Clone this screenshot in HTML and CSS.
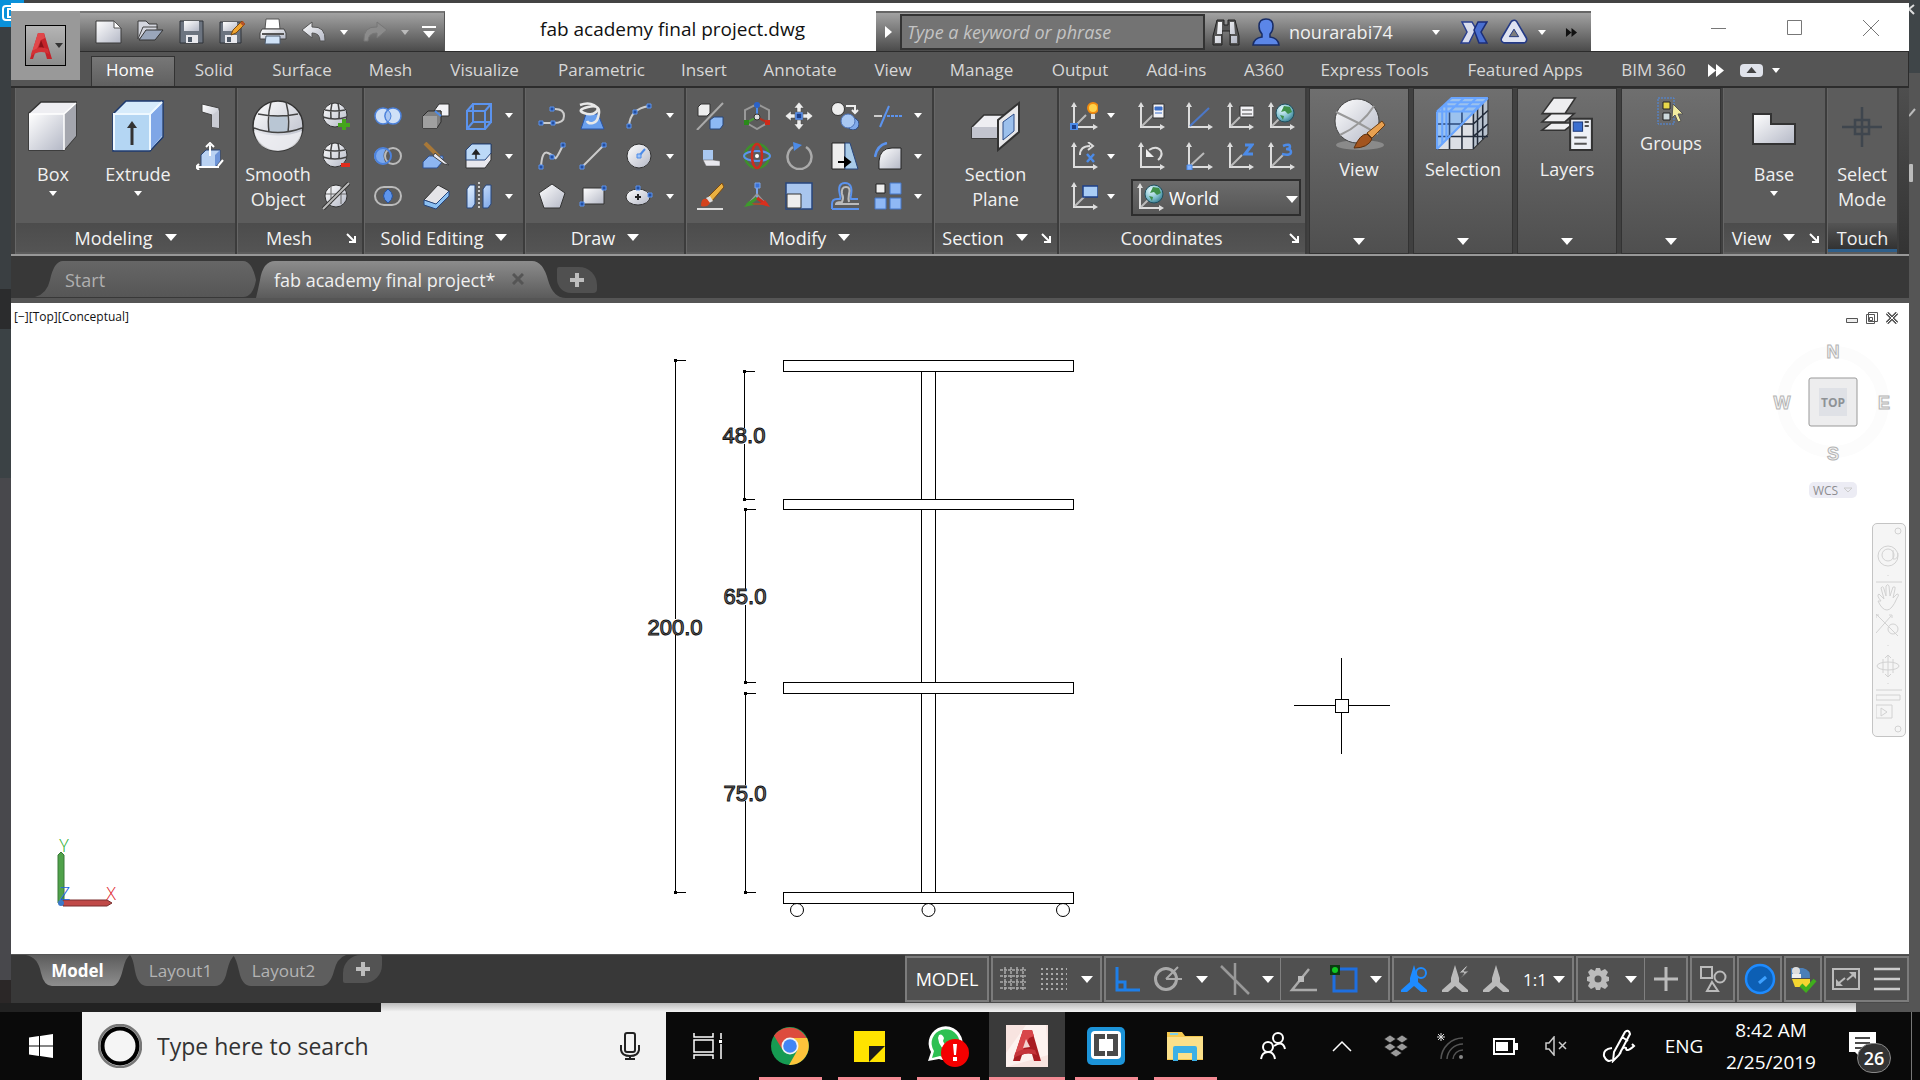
FILE: index.html
```html
<!DOCTYPE html>
<html lang="en">
<head>
<meta charset="utf-8">
<title>fab academy final project.dwg</title>
<link rel="stylesheet" href="styles.css">
</head>
<body>
<svg class="sprite" aria-hidden="true">
  <defs>
    <linearGradient id="gw" x1="0" y1="0" x2="1" y2="1"><stop offset="0" stop-color="#fff"/><stop offset="1" stop-color="#b4b8c6"/></linearGradient>
    <linearGradient id="gb" x1="0" y1="0" x2="1" y2="1"><stop offset="0" stop-color="#e4f2ff"/><stop offset="1" stop-color="#7fa9ea"/></linearGradient>
    <linearGradient id="tabOn" x1="0" y1="0" x2="0" y2="1"><stop offset="0" stop-color="#8c8c8c"/><stop offset="1" stop-color="#5b5b5b"/></linearGradient>
    <linearGradient id="tabOff" x1="0" y1="0" x2="0" y2="1"><stop offset="0" stop-color="#666"/><stop offset="1" stop-color="#565656"/></linearGradient>
    <linearGradient id="lay" x1="0" y1="0" x2="0" y2="1"><stop offset="0" stop-color="#5c5c5c"/><stop offset="1" stop-color="#8e8e8e"/></linearGradient>
    <radialGradient id="gl" cx=".35" cy=".3" r=".8"><stop offset="0" stop-color="#e8fbff"/><stop offset=".6" stop-color="#7cbccb"/><stop offset="1" stop-color="#2f7487"/></radialGradient>
  </defs>
  <symbol id="logo-a" viewBox="0 0 24 28"><path d="M1 27L9 1h6l8 26h-5l-2-7q-5-2-10 1l-2 6z" fill="#c4232a"/><path d="M9 1h6l1 5-4 2-4 9-6 6z" fill="#e0474a"/><path d="M10 15l2-7 3 8z" fill="#8a1218"/><path d="M3 19q8-6 16-2l1 5q-9-5-18 2z" fill="#d33236"/></symbol>
  <symbol id="new" viewBox="0 0 28 28"><path d="M1 3h18l7 7v15H1z" fill="url(#gw)" stroke="#3a3a3a"/><path d="M19 3v7h7z" fill="#fff" stroke="#555"/></symbol>
  <symbol id="open" viewBox="0 0 28 28"><path d="M2 21V3h8l3 3h8v5" fill="#d5d7df" stroke="#3a3a3a"/><path d="M3 22l7-10h17l-8 10z" fill="#9aa6ba" stroke="#333"/><path d="M2 21L7 9h15" fill="none" stroke="#444"/></symbol>
  <symbol id="save" viewBox="0 0 28 28"><path d="M3 3h23v22H3z" fill="#6c7480" stroke="#2e3238"/><path d="M7 3h15v10H7z" fill="url(#gw)"/><path d="M9 17h12v8H9z" fill="#e9e9ee"/><path d="M11 19h4v5h-4z" fill="#4f5a68"/></symbol>
  <symbol id="saveas" viewBox="0 0 28 28"><path d="M2 4h21v21H2z" fill="#6c7480" stroke="#2e3238"/><path d="M5 4h14v9H5z" fill="url(#gw)"/><path d="M7 17h12v8H7z" fill="#e9e9ee"/><path d="M9 19h4v5H9z" fill="#4f5a68"/><path d="M13 17l2-5 9-9 3 3-9 9z" fill="#f0a530" stroke="#7a4a10"/><path d="M22 5l3-2 2 3-2 2z" fill="#b5522a"/></symbol>
  <symbol id="print" viewBox="0 0 28 28"><path d="M7 1h13l1 10H6z" fill="#fff" stroke="#555"/><path d="M3 11h22l2 4v6H1v-6z" fill="url(#gw)" stroke="#444"/><path d="M3 16h22" stroke="#555" stroke-width="2"/><path d="M7 18h14v8H6z" fill="#cfe2f7" stroke="#4c5a6c"/></symbol>
  <symbol id="undo" viewBox="0 0 28 28"><path d="M2 12l10-8v5q14-1 13 14h-5q0-8-8-8v5z" fill="url(#gw)" stroke="#555"/></symbol>
  <symbol id="redo" viewBox="0 0 28 28"><path d="M26 12L16 4v5Q2 8 3 23h4q0-8 9-8v5z" fill="#8b8b8b" stroke="#777"/></symbol>
  <symbol id="qmenu" viewBox="0 0 16 14"><path d="M1 1h14v2H1zM2 6h12l-6 7z" fill="#fff"/></symbol>
  <symbol id="bino" viewBox="0 0 28 28"><path d="M5 2h7v5h4V2h7l4 16v9h-9V13h-8v14H1v-9z" fill="#555" stroke="#222"/><path d="M6 4h4v12H5zM18 4h4l1 12h-5zM3 18h6v7H3zM19 18h6v7h-6z" fill="url(#gw)"/></symbol>
  <symbol id="user" viewBox="0 0 28 28"><path d="M14 1q7 0 7 7 0 5-3 8v3q8 1 9 8H1q1-7 9-8v-3q-3-3-3-8 0-7 7-7z" fill="#5b86e8" stroke="#182c66" stroke-width="1.5"/></symbol>
  <symbol id="xch" viewBox="0 0 28 28"><path d="M2 4h10l4 7-4 8-3 6H1l6-11z" fill="#d9dded" stroke="#2a3f8f" stroke-width="1.500"/><path d="M27 4h-9l-4 8 5 13h8l-6-11z" fill="#4a6fd0" stroke="#1c2e78" stroke-width="1.500"/></symbol>
  <symbol id="a360" viewBox="0 0 30 28"><path d="M15 5L5 22h20z" fill="none" stroke="#243a86" stroke-width="9" stroke-linejoin="round"/><path d="M15 5L5 22h20z" fill="#777" stroke="#dfe3f2" stroke-width="5.500" stroke-linejoin="round"/><path d="M15 11l-5 8h10z" fill="#7d7d7d" stroke="#243a86"/></symbol>

  <symbol id="box" viewBox="0 0 52 52"><path d="M2 13L14 2h35v34L37 50H2z" fill="#eeeef2" stroke="#333" stroke-width="1.5"/><path d="M2 14h35v36H2z" fill="url(#gw)"/><path d="M37 14L49 3v33L37 50z" fill="#a4a6ae"/><path d="M2 14h35v36M37 14L49 3" fill="none" stroke="#fff" stroke-width="1.5"/></symbol>
  <symbol id="extrude" viewBox="0 0 52 52"><path d="M1 14L14 1h37v36L38 51H1z" fill="#d6ebfb" stroke="#1d3a70" stroke-width="1.5"/><path d="M3 15h35v35H3z" fill="#b4d6f3"/><path d="M38 15L50 3v33L38 50z" fill="#7fa6e6"/><path d="M2 50V14h36v36M38 14L50 2" fill="none" stroke="#eef8ff" stroke-width="2"/><path d="M20 45V26" stroke="#333" stroke-width="3"/><path d="M15 28l5-7 5 7z" fill="#333"/></symbol>
  <symbol id="poly" viewBox="0 0 28 28"><path d="M6 2l17 4v20l-7-1V13L6 10z" fill="url(#gw)" stroke="#444"/><path d="M16 13l7-5v18l-7-1z" fill="#c9cbd3"/></symbol>
  <symbol id="presspull" viewBox="0 0 28 28"><path d="M5 13l5-5h14v11l-5 6H5z" fill="#b9d2f3" stroke="#2b4575"/><path d="M19 13l5-5v11l-5 6z" fill="#6d94d8"/><path d="M14 14V3M10 5l4-4 4 4M1 25h22M3 22l-3 3 3 3M22 24l5-6" fill="none" stroke="#fff" stroke-width="2"/></symbol>
  <symbol id="ball" viewBox="0 0 52 52"><circle cx="26" cy="26" r="25" fill="url(#gw)" stroke="#333" stroke-width="1.5"/><path d="M18 15h17l1 17H17z" fill="#b9c6d4"/><path d="M2 28q24 9 48 0M6 14q20 4 40 0M19 2q-4 14-2 30M34 2q4 14 2 30" fill="none" stroke="#444" stroke-width="1.5"/><path d="M2 31q24 9 48 0-2 18-24 20Q5 50 2 31z" fill="#f0f0f4" opacity=".8"/></symbol>
  <symbol id="mball" viewBox="0 0 28 28"><circle cx="13" cy="13" r="12" fill="url(#gw)" stroke="#333"/><path d="M1 15q12 4 24 0M3 8q10 2 20 0M10 1q-2 8-1 15M16 1q2 8 1 15" fill="none" stroke="#444" stroke-width="1.5"/></symbol>
  <symbol id="mplus" viewBox="0 0 28 28"><use href="#mball"/><path d="M20 17h4v4h4v4h-4v4h-4v-4h-4v-4h4z" fill="#45a51c"/></symbol>
  <symbol id="mminus" viewBox="0 0 28 28"><use href="#mball"/><path d="M19 21h10v4H19z" fill="#e02c1c"/></symbol>
  <symbol id="mcrease" viewBox="0 0 28 28"><circle cx="14" cy="14" r="11" fill="url(#gw)" stroke="#333"/><path d="M4 12h20M9 4v18M19 4v18" stroke="#666"/><path d="M1 27L27 1" stroke="#333" stroke-width="4"/><path d="M1 27L27 1" stroke="#bbb" stroke-width="2"/></symbol>
  <symbol id="union" viewBox="0 0 28 28"><circle cx="9" cy="14" r="8" fill="#cfe0f7" stroke="#4c82dc" stroke-width="1.5"/><circle cx="19" cy="14" r="8" fill="#cfe0f7" stroke="#4c82dc" stroke-width="1.5"/><path d="M14 8q6 6 0 12-6-6 0-12z" fill="#a9c6f2" stroke="#4c82dc"/></symbol>
  <symbol id="subtract" viewBox="0 0 28 28"><path d="M12 7a8 8 0 1 0 0 14q-5-7 0-14z" fill="#7ca9ee"/><circle cx="19" cy="14" r="8" fill="none" stroke="#bbb" stroke-width="2"/><circle cx="9" cy="14" r="8" fill="none" stroke="#4c82dc" stroke-width="2"/></symbol>
  <symbol id="intersect" viewBox="0 0 28 28"><rect x="1" y="5" width="26" height="18" rx="9" fill="none" stroke="#bbb" stroke-width="2"/><path d="M14 7q9 7 0 14-9-7 0-14z" fill="#5e95ec" stroke="#27529f"/></symbol>
  <symbol id="fillet3" viewBox="0 0 28 28"><path d="M12 9l5-7h10v12h-8V9z" fill="#f2f2f5" stroke="#333"/><path d="M1 14l5-5h13v11l-4 6H1z" fill="#808080" stroke="#2d2d2d"/><path d="M1 14h14v12H1z" fill="#a0a0a0"/><path d="M13 9l6 5" stroke="#4c8be8" stroke-width="2"/></symbol>
  <symbol id="wire" viewBox="0 0 28 28"><path d="M2 9h18v18H2zM8 2h18v18H8zM2 9l6-7M20 9l6-7M20 27l6-7M2 27l6-7" fill="none" stroke="#5b93ee" stroke-width="2"/></symbol>
  <symbol id="slice" viewBox="0 0 28 28"><path d="M1 20l6-6h14v5l-6 7H1z" fill="#8db6f2" stroke="#2e5296"/><path d="M3 1l14 14" stroke="#a87838" stroke-width="4"/><path d="M13 11l14 12-5-1-11-8z" fill="#e8e8ee" stroke="#444"/></symbol>
  <symbol id="exface" viewBox="0 0 28 28"><path d="M1 8l6-6h19v16l-6 8H1z" fill="#e8e8ee" stroke="#333"/><path d="M1 8l6-6h19v9l-6 7H1z" fill="#bcd9f7" stroke="#27467d"/><path d="M11 17v-6M8 12l3-4 3 4z" fill="#222" stroke="#222" stroke-width="1.5"/></symbol>
  <symbol id="eraser" viewBox="0 0 28 28"><path d="M2 18L16 3l11 6-12 14z" fill="#e4e4e8" stroke="#333"/><path d="M2 18v5l12 4 13-13V9L14 22z" fill="#8cc0f2" stroke="#27467d"/></symbol>
  <symbol id="separate" viewBox="0 0 28 28"><path d="M2 7l3-4h5v19l-3 4H2zM18 7l3-4h5v19l-3 4h-5z" fill="url(#gb)" stroke="#27467d"/><path d="M14 0v28" stroke="#ccc" stroke-width="2" stroke-dasharray="2 2"/></symbol>
  <symbol id="pline" viewBox="0 0 28 28"><path d="M3 21h13q10 0 10-7t-9-7" fill="none" stroke="#ccc" stroke-width="2"/><path d="M1 19h4v4H1zM13 19h4v4h-4zM12 5h4v4h-4z" fill="#244f9f" stroke="#5b93ee"/></symbol>
  <symbol id="sweep" viewBox="0 0 28 28"><path d="M2 27L7 12h12l6 15z" fill="#6ba0ee" stroke="#2a55a5"/><path d="M1 3q8-3 14 0t2 7-12 1 4-6 11 6-6 10-6-2" fill="none" stroke="#e8e8e8" stroke-width="2.5"/></symbol>
  <symbol id="arc" viewBox="0 0 28 28"><path d="M4 24Q5 7 24 4" fill="none" stroke="#ccc" stroke-width="2"/><path d="M2 22h4v4H2zM8 8h4v4H8zM22 2h4v4h-4z" fill="#244f9f" stroke="#5b93ee"/></symbol>
  <symbol id="spline" viewBox="0 0 28 28"><path d="M3 25Q4 8 10 11t7 5 8-13" fill="none" stroke="#ccc" stroke-width="2"/><path d="M1 23h4v4H1zM12 13h4v4h-4zM23 1h4v4h-4z" fill="#244f9f" stroke="#5b93ee"/></symbol>
  <symbol id="line" viewBox="0 0 28 28"><path d="M3 25L25 3" stroke="#ccc" stroke-width="2"/><path d="M1 23h4v4H1zM23 1h4v4h-4z" fill="#244f9f" stroke="#5b93ee"/></symbol>
  <symbol id="circle" viewBox="0 0 28 28"><circle cx="14" cy="14" r="12" fill="url(#gw)" stroke="#333"/><path d="M14 14l6-7" stroke="#4c8be8" stroke-width="2"/><path d="M12 12h4v4h-4z" fill="#9ec4f8" stroke="#4c8be8"/></symbol>
  <symbol id="pentagon" viewBox="0 0 28 28"><path d="M14 2l13 9-5 15H6L1 11z" fill="url(#gw)" stroke="#333"/></symbol>
  <symbol id="rect" viewBox="0 0 28 28"><path d="M4 6h21v16H4z" fill="url(#gw)" stroke="#333"/><path d="M1 20h4v4H1zM23 4h4v4h-4z" fill="#244f9f" stroke="#5b93ee"/></symbol>
  <symbol id="ellipse" viewBox="0 0 28 28"><ellipse cx="13" cy="15" rx="12" ry="8" fill="url(#gw)" stroke="#333"/><path d="M10 15h6M13 12v6" stroke="#222" stroke-width="2"/><path d="M11 4h4v4h-4zM23 11h4v4h-4z" fill="#244f9f" stroke="#5b93ee"/></symbol>
  <symbol id="convert" viewBox="0 0 28 28"><path d="M2 5l3-3h9v9l-3 3H2z" fill="#eee" stroke="#333"/><path d="M14 18l4-3h9v8l-3 4H14z" fill="#8db9f5" stroke="#27467d"/><path d="M1 28L27 1" stroke="#aaa" stroke-width="2"/></symbol>
  <symbol id="gizmo" viewBox="0 0 28 28"><path d="M14 2l12 6v12l-12 7-12-7V8z" fill="none" stroke="#999" stroke-width="2"/><path d="M14 15V4" stroke="#4c8be8" stroke-width="2"/><path d="M14 15L3 21" stroke="#4a9a3a" stroke-width="2"/><path d="M14 15l11 6" stroke="#b03020" stroke-width="2"/><circle cx="14" cy="3" r="3" fill="#2b62c8"/><path d="M1 18h5v5H1z" fill="#2a8a1a"/><path d="M22 18h5v5h-5z" fill="#d02a18"/><circle cx="14" cy="15" r="3" fill="#ddd" stroke="#333"/></symbol>
  <symbol id="move" viewBox="0 0 28 28"><path d="M14 0l5 6h-3v4h-4V6H9zM14 28l5-6h-3v-4h-4v4H9zM0 14l6-5v3h4v4H6v3zM28 14l-6-5v3h-4v4h4v3z" fill="#eee" stroke="#444" stroke-width=".5"/><path d="M11 11h6v6h-6z" fill="#1d3f88" stroke="#5b93ee" stroke-width="1.5"/></symbol>
  <symbol id="copy" viewBox="0 0 28 28"><circle cx="7" cy="7" r="6.500" fill="#eee" stroke="#333"/><circle cx="22" cy="22" r="6" fill="#7fa9ea" stroke="#27467d"/><circle cx="17" cy="19" r="7" fill="#a9c8f2" stroke="#4c72b8"/><path d="M15 4h9v6M21 8l3 3 3-3" fill="none" stroke="#eee" stroke-width="2"/></symbol>
  <symbol id="trim" viewBox="0 0 28 28"><path d="M0 14h8" stroke="#ccc" stroke-width="2"/><path d="M13 14h15" stroke="#5b93ee" stroke-width="2" stroke-dasharray="3 1"/><path d="M6 25L15 4" stroke="#5b93ee" stroke-width="2"/></symbol>
  <symbol id="align3" viewBox="0 0 28 28"><path d="M7 8h10v10H7z" fill="#a9c8f0"/><path d="M7 18h10l7 1v5H10z" fill="#e8e8ee" stroke="#555" stroke-width=".5"/></symbol>
  <symbol id="rot3" viewBox="0 0 28 28"><circle cx="14" cy="14" r="12" fill="none" stroke="#3e8f2c" stroke-width="2.500"/><ellipse cx="14" cy="14" rx="13" ry="5" fill="none" stroke="#5b93ee" stroke-width="2"/><ellipse cx="14" cy="14" rx="5" ry="12" fill="none" stroke="#cc2c1e" stroke-width="2.500"/><circle cx="14" cy="14" r="2" fill="#fff"/></symbol>
  <symbol id="rotate" viewBox="0 0 28 28"><path d="M8 5a12 12 0 1 0 13 0" fill="none" stroke="#aaa" stroke-width="2.500"/><path d="M8 0l9 3-8 6z" fill="#4c8be8"/></symbol>
  <symbol id="stretch" viewBox="0 0 28 28"><path d="M1 1h13v26H1z" fill="#eee" stroke="#222"/><path d="M14 1h5l8 26H14z" fill="#a9cbe8" stroke="#27467d"/><path d="M7 20h9M14 16l5 4-5 4z" fill="#000" stroke="#000" stroke-width="2"/></symbol>
  <symbol id="fillet" viewBox="0 0 28 28"><path d="M5 27V19Q6 6 18 6h9v21z" fill="url(#gw)" stroke="#222"/><path d="M1 15Q3 3 13 1" fill="none" stroke="#5b93ee" stroke-width="2.500"/></symbol>
  <symbol id="brush" viewBox="0 0 28 28"><path d="M12 15L26 1l2 4-12 14z" fill="#eab040" stroke="#7a4a10"/><path d="M10 16l4-2 3 5-4 2z" fill="#ddd"/><path d="M5 24q0-9 6-7l3 4q-3 5-9 3z" fill="#d4421c"/><path d="M1 27h26" stroke="#ddd" stroke-width="2"/></symbol>
  <symbol id="scale3" viewBox="0 0 28 28"><path d="M14 6v10" stroke="#7ba4e8" stroke-width="2"/><path d="M14 12L5 22M14 12l9 10" stroke="#999" stroke-width="1.500"/><path d="M14 16L4 23" stroke="#3e9a2c" stroke-width="3"/><path d="M14 16l10 7" stroke="#cc2c1e" stroke-width="3"/><path d="M5 22h18" stroke="#a05030" stroke-width="2"/><path d="M12 1h5v5h-5z" fill="#3b72d8" stroke="#7ba4e8"/><path d="M1 25l5-6 5 4z" fill="#3e9a2c"/><path d="M27 25l-5-7-6 4z" fill="#d9301e"/></symbol>
  <symbol id="scale" viewBox="0 0 28 28"><path d="M1 1h26v26H1z" fill="#a9c6ee" stroke="#27467d" stroke-width="1.500"/><path d="M2 12h14v14H2z" fill="#eee" stroke="#333"/></symbol>
  <symbol id="offset" viewBox="0 0 28 28"><path d="M1 27v-5q0-5 5-5h3q1-2 0-4-3-12 5-12t6 12q-1 2 0 4h7M1 27h27" fill="none" stroke="#5b93ee" stroke-width="2"/><path d="M28 22H5q0-2 6-2 2-4 0-8-1-7 4-7t3 7q-1 5 0 8" fill="none" stroke="#bbb" stroke-width="2"/></symbol>
  <symbol id="array" viewBox="0 0 28 28"><path d="M2 2h9v9H2z" fill="#eee" stroke="#222"/><path d="M16 1h11v11H16zM1 16h11v11H1zM16 16h11v11H16z" fill="#8fb8f5" stroke="#4476c8"/></symbol>
  <symbol id="section" viewBox="0 0 52 52"><path d="M2 27l12-12h24v16L28 38H2z" fill="#eeeef2" stroke="#333" stroke-width="1.500"/><path d="M2 27h26v11H2z" fill="#c2c4ce"/><path d="M28 20L49 3v29L28 50z" fill="#e8e8ea" stroke="#333" stroke-width="2"/><path d="M33 22l11-8v17l-11 9z" fill="#9cc0ec" stroke="#2c4c88"/></symbol>
  <symbol id="ax" viewBox="0 0 28 28"><path d="M4 3v22h22" fill="none" stroke="#ddd" stroke-width="2"/><path d="M4 0l3 5H1zM28 25l-5 3v-6z" fill="#ddd"/></symbol>
  <symbol id="diag" viewBox="0 0 28 28"><path d="M5 24l11-11" stroke="#bbb" stroke-width="2"/></symbol>
  <symbol id="globe" viewBox="0 0 20 20"><circle cx="10" cy="10" r="9" fill="url(#gl)" stroke="#1f5060"/><path d="M9 3l6 1 2 5-4 2-3-3-4 1zM5 12l4 1-1 4z" fill="#3f8f4a"/></symbol>
  <symbol id="c-origin" viewBox="0 0 28 28"><use href="#ax"/><use href="#diag"/><path d="M1 22h6v6H1z" fill="#1d3f88" stroke="#4c8be8" stroke-width="2"/><circle cx="23" cy="6" r="5" fill="#ffd24a" stroke="#f08a10" stroke-width="2"/><path d="M21 12h4v5h-4z" fill="#ddd"/></symbol>
  <symbol id="c-named" viewBox="0 0 28 28"><use href="#ax"/><use href="#diag"/><path d="M16 2h11v14H16z" fill="#f2f2f6" stroke="#333"/><path d="M18 5h7v3h-7zM18 11h7" fill="#3b6fc8" stroke="#3b6fc8"/></symbol>
  <symbol id="c-view" viewBox="0 0 28 28"><use href="#ax"/><path d="M5 24L24 6" stroke="#4c78c8" stroke-width="2"/></symbol>
  <symbol id="c-prop" viewBox="0 0 28 28"><use href="#ax"/><use href="#diag"/><path d="M14 4h14v11H14z" fill="#f2f2f6" stroke="#333"/><path d="M16 8h10M16 12h10" stroke="#444"/></symbol>
  <symbol id="c-world" viewBox="0 0 28 28"><use href="#ax"/><use href="#diag"/><use href="#globe" x="8" y="1" width="20" height="20"/></symbol>
  <symbol id="c-x" viewBox="0 0 28 28"><use href="#ax"/><path d="M10 13q0-9 10-9M18 0l5 4-5 4" fill="none" stroke="#ddd" stroke-width="2"/><path d="M17 12l7 8M24 12l-7 8" stroke="#4c8be8" stroke-width="2.500"/></symbol>
  <symbol id="c-prev" viewBox="0 0 28 28"><use href="#ax"/><path d="M12 8q8-5 12 1 2 5-3 9" fill="none" stroke="#ddd" stroke-width="2"/><path d="M9 7v8h8z" fill="#eee"/></symbol>
  <symbol id="c-face" viewBox="0 0 28 28"><use href="#ax"/><path d="M5 24l14-13" stroke="#bbb" stroke-width="2"/><path d="M2 23h5v5H2z" fill="#7fb0ff" stroke="#4c8be8"/></symbol>
  <symbol id="c-z" viewBox="0 0 28 28"><use href="#ax"/><use href="#diag"/><path d="M19 3h7l-7 9h8" fill="none" stroke="#4c8be8" stroke-width="3"/></symbol>
  <symbol id="c-3" viewBox="0 0 28 28"><use href="#ax"/><use href="#diag"/><path d="M16 4q7-3 7 1 0 2-4 2 5 0 5 3 0 4-9 2" fill="none" stroke="#4c8be8" stroke-width="2.500"/></symbol>
  <symbol id="c-obj" viewBox="0 0 28 28"><use href="#ax"/><use href="#diag"/><path d="M13 4h15v11H13z" fill="#a9cdf5" stroke="#1d3f88" stroke-width="1.500"/></symbol>
  <symbol id="vstyle" viewBox="0 0 54 54"><ellipse cx="28" cy="48" rx="24" ry="5" fill="#8a8a8a"/><circle cx="25" cy="24" r="22" fill="url(#gw)" stroke="#444"/><path d="M4 15q22 10 42 22M8 38Q30 28 42 9" fill="none" stroke="#999" stroke-width="2"/><path d="M35 36L50 24l3 4-13 13z" fill="#e8a050" stroke="#6b3c12"/><path d="M22 51q6-14 13-14l5 5q-4 9-18 9z" fill="#a3541e" stroke="#5e2f0c"/></symbol>
  <symbol id="selbox" viewBox="0 0 52 52"><path d="M1 14L15 1h35v35L36 50H1z" fill="#b9c3cf" stroke="#333"/><path d="M1 14h35v36H1z" fill="#dcdfe5"/><path d="M13 50V38M25 50V26M25 38h25M25 26h11M36 14v36M36 26l14-13M36 38l14-12M40 10v36M45 6v35M13 38h23" fill="none" stroke="#222b3a" stroke-width="1.500"/><path d="M1 50V14L15 1h35z" fill="#9cc2ee"/><path d="M1 38h12M1 26h24M13 14v24M25 14v12" fill="none" stroke="#2b4a7c" stroke-width="1.500"/><path d="M1 14L15 1h35M1 14h35L50 1M6 9h35M10 5h35M13 14L27 1M25 14L39 1M1 50V14M6 45V10M10 41V6M1 50L50 1" fill="none" stroke="#69a5ff" stroke-width="2"/></symbol>
  <symbol id="layers" viewBox="0 0 50 52"><path d="M1 32l9-7h22l-9 7zM1 24l9-8h22l-9 8zM1 16L12 1h21L23 16z" fill="#eeeef0" stroke="#333" stroke-width="1.500"/><path d="M28 21h21v30H28z" fill="#eef1f6" stroke="#333" stroke-width="2"/><path d="M31 24h9v9h-9z" fill="#3b6fd0" stroke="#1d3a78"/><path d="M42 24h4M42 28h4M32 39h12M32 45h12" stroke="#555" stroke-width="2"/></symbol>
  <symbol id="groups" viewBox="0 0 28 28"><path d="M1 1h16v26H1z" fill="none" stroke="#4c8be8" stroke-dasharray="2 1"/><path d="M6 5h7v7H6z" fill="#e8d84a" stroke="#222"/><path d="M6 16h7v7H6z" fill="#ccd8dc" stroke="#222"/><path d="M16 7l10 10h-5l3 7-3 1-3-7-3 3z" fill="#f2eca0" stroke="#555"/></symbol>
  <symbol id="base" viewBox="0 0 46 34"><path d="M2 2h18v10h24v20H2z" fill="url(#gw)" stroke="#333" stroke-width="2"/></symbol>
  <symbol id="touch" viewBox="0 0 42 42"><path d="M21 1v40M1 21h40M14 14h14v14H14z" fill="none" stroke="#3f464e" stroke-width="2.500"/></symbol>
  <symbol id="launch" viewBox="0 0 10 10"><path d="M1 1l7 7M9 3v6H3" fill="none" stroke="#fff" stroke-width="2"/></symbol>
  <symbol id="dbl" viewBox="0 0 16 13"><path d="M0 0l8 6.500L0 13zM8 0l8 6.500L8 13z" fill="currentColor"/></symbol>
  <symbol id="plus" viewBox="0 0 14 14"><path d="M5 0h4v5h5v4H9v5H5V9H0V5h5z" fill="#bdbdbd"/></symbol>

  <symbol id="s-grid" viewBox="0 0 28 28"><path d="M6 2v24M12 2v24M18 2v24M24 2v24M1 5h26M1 11h26M1 17h26M1 23h26" stroke="#aaa" stroke-width="1.500" stroke-dasharray="3 1"/></symbol>
  <symbol id="s-dots" viewBox="0 0 28 28"><path d="M2 4h26M2 9h26M2 14h26M2 19h26M2 24h26" stroke="#aaa" stroke-width="2" stroke-dasharray="2 3"/></symbol>
  <symbol id="s-ortho" viewBox="0 0 28 28"><path d="M4 2v23h23M4 17h8v8" fill="none" stroke="#1e7fe8" stroke-width="3"/></symbol>
  <symbol id="s-polar" viewBox="0 0 28 28"><circle cx="12" cy="14" r="10.500" fill="none" stroke="#aaa" stroke-width="3"/><path d="M12 14L24 2M12 14h16" stroke="#aaa" stroke-width="2"/></symbol>
  <symbol id="s-iso" viewBox="0 0 32 34"><path d="M2 4l28 28M16 1v32" stroke="#999" stroke-width="2.500"/></symbol>
  <symbol id="s-track" viewBox="0 0 28 28"><path d="M20 4L3 25h25" fill="none" stroke="#aaa" stroke-width="2.500"/><path d="M9 11h6v6H9z" fill="#bbb"/></symbol>
  <symbol id="s-snap" viewBox="0 0 28 28"><path d="M4 4h22v22H4z" fill="none" stroke="#1e6fe0" stroke-width="3"/><path d="M0 0h10v10H0z" fill="#0b3b12"/><circle cx="5" cy="5" r="3" fill="#10c820"/></symbol>
  <symbol id="s-ann" viewBox="0 0 28 28"><path d="M14 0l4 13v4l9 8v2h-6l-7-6-7 6H1v-2l9-8v-4z" fill="currentColor"/></symbol>
  <symbol id="s-gear" viewBox="0 0 24 24"><path d="M10 1h4l1 3 4-2 3 3-2 4 3 1v4l-3 1 2 4-3 3-4-2-1 3h-4l-1-3-4 2-3-3 2-4-3-1v-4l3-1-2-4 3-3 4 2z" fill="#bbb"/><circle cx="12" cy="12" r="3.500" fill="#555"/></symbol>
  <symbol id="s-plus" viewBox="0 0 24 24"><path d="M12 0v24M0 12h24" stroke="#bbb" stroke-width="3"/></symbol>
  <symbol id="s-shapes" viewBox="0 0 28 28"><path d="M2 2h11v11H2zM13 17l6 9H8z" fill="none" stroke="#bbb" stroke-width="2"/><circle cx="21" cy="12" r="5.500" fill="none" stroke="#bbb" stroke-width="2"/></symbol>
  <symbol id="s-perf" viewBox="0 0 32 32"><circle cx="16" cy="16" r="14" fill="#0d5fb4" stroke="#1e8bff" stroke-width="2.500"/><path d="M15 20l7-6" stroke="#3da0ff" stroke-width="3"/></symbol>
  <symbol id="s-pc" viewBox="0 0 28 28"><path d="M2 3h12q8 2 7 10H2z" fill="#4b7fb8"/><path d="M3 14h18v8H6z" fill="#f5d530"/><circle cx="7" cy="6" r="4" fill="#ddd"/><path d="M3 9h9v4H3z" fill="#eee"/><path d="M12 20l5 5 9-10" fill="none" stroke="#3fae1c" stroke-width="4"/></symbol>
  <symbol id="s-full" viewBox="0 0 28 22"><path d="M1 1h26v20H1z" fill="none" stroke="#bbb" stroke-width="2"/><path d="M17 4h7v7zM4 11v7h7z" fill="#bbb"/><path d="M15 12l6-5M7 15l6-5" stroke="#bbb" stroke-width="2"/></symbol>
  <symbol id="s-menu" viewBox="0 0 26 24"><path d="M0 2h26M0 12h26M0 22h26" stroke="#ccc" stroke-width="2.500"/></symbol>

  <symbol id="t-win" viewBox="0 0 24 24"><path d="M0 3.500l10-1.500v9.500H0zM11 2l13-2v11.500H11zM0 12.500h10V22L0 20.500zM11 12.500h13V24L11 22z" fill="#fff"/></symbol>
  <symbol id="t-cortana" viewBox="0 0 44 44"><circle cx="22" cy="22" r="21" fill="none" stroke="#777" stroke-width="2.500"/><circle cx="22" cy="22" r="17.500" fill="#f5f5f5" stroke="#000" stroke-width="4"/></symbol>
  <symbol id="t-mic" viewBox="0 0 20 28"><rect x="5" y="1" width="10" height="19" rx="2" fill="none" stroke="#222" stroke-width="2"/><path d="M1 13v5q1 6 9 6t9-6v-5M10 24v3M5 27h10" fill="none" stroke="#222" stroke-width="2"/></symbol>
  <symbol id="t-view" viewBox="0 0 30 28"><path d="M1 1v4h19V1M1 8h19v12H1zM1 27v-4h19v4M28 1v6M28 12v15" fill="none" stroke="#fff" stroke-width="1.500"/><path d="M26 8h3v3h-3z" fill="#fff"/></symbol>
  <symbol id="t-chrome" viewBox="0 0 38 38"><circle cx="19" cy="19" r="19" fill="#169b52"/><path d="M19 11h17A19 19 0 0 1 18 38l8-14z" fill="#fdc43b"/><path d="M3 8.700L11 22l8-11h16.500A19 19 0 0 0 3 8.700z" fill="#dd4b3e"/><circle cx="19" cy="19" r="8.500" fill="#f3f3f3"/><circle cx="19" cy="19" r="6.800" fill="#4285f4"/></symbol>
  <symbol id="t-note" viewBox="0 0 31 31"><path d="M0 0h31v31H0z" fill="#ffe300"/><path d="M15 15h16L15 31z" fill="#1a1a1a"/></symbol>
  <symbol id="t-whats" viewBox="0 0 42 42"><path d="M1 36l3-9A17 17 0 1 1 12 34z" fill="#fff"/><path d="M5 33l2-7a14 14 0 1 1 6 5z" fill="#2dc052"/><path d="M12 10q3-2 5 3l-1 3q2 5 6 6l3-2 4 3q0 5-6 4-11-3-12-14z" fill="#fff"/><circle cx="28" cy="28" r="14" fill="#f40000"/><path d="M26 19h4l-1 11h-2zM26 32h4v4h-4z" fill="#fff"/></symbol>
  <symbol id="t-acad" viewBox="0 0 42 42"><path d="M0 0h42v42H0z" fill="#f8e4e0"/><path d="M0 28l20-28h20l2 30-42 12z" fill="#fdf2ef"/><path d="M7 36L17 5h9l9 31h-7l-2-7q-5-2-10 1l-2 6z" fill="#a81c22"/><path d="M17 5h9l2 6-5 2-6 12-9 7z" fill="#d8464a"/><path d="M17 23l3-9 4 8z" fill="#f3d3d0"/><path d="M9 28q9-6 20-3l2 5q-12-4-23 3z" fill="#c5343a"/></symbol>
  <symbol id="t-brk" viewBox="0 0 38 38"><rect width="38" height="38" rx="5" fill="#1c93d8"/><rect x="4" y="4" width="30" height="28" rx="4" fill="#fff"/><path d="M7 7h11v5h-6v12h6v5H7zM31 7H20v5h6v12h-6v5h11z" fill="#4a4a4a"/></symbol>
  <symbol id="t-exp" viewBox="0 0 38 32"><path d="M1 2h15l3 4h18v24H1z" fill="#f4c84f"/><path d="M1 7h36v22H1z" fill="#fbe08a"/><path d="M7 31V18q0-2 2-2h20q2 0 2 2v13h-5v-8H12v8z" fill="#3cb0e6"/><path d="M4 3h8v2H4z" fill="#7fd0e8"/></symbol>
  <symbol id="t-people" viewBox="0 0 26 28"><g fill="none" stroke="#fff" stroke-width="2"><circle cx="8" cy="15" r="5"/><path d="M1 27q1-7 7-7t7 7"/><circle cx="18" cy="6" r="5"/><path d="M14 14q9-6 11 3"/></g></symbol>
  <symbol id="t-up" viewBox="0 0 20 12"><path d="M1 11l9-9 9 9" fill="none" stroke="#fff" stroke-width="1.500"/></symbol>
  <symbol id="t-drop" viewBox="0 0 24 22"><path d="M6 0l6 4-6 4-6-4zM18 0l6 4-6 4-6-4zM6 8l6 4-6 4-6-4zM18 8l6 4-6 4-6-4zM12 14l6 4-6 4-6-4z" fill="#9a9a9a" stroke="#0a0a0a" stroke-width=".7"/></symbol>
  <symbol id="t-wifi" viewBox="0 0 28 28"><path d="M5 27A22 22 0 0 1 27 6M11 27a16 16 0 0 1 16-15M17 27a10 10 0 0 1 10-9" fill="none" stroke="#555" stroke-width="1.500"/><circle cx="25" cy="25" r="2" fill="#888"/><path d="M5 1v8M1 5h8M2 2l6 6M8 2L2 8" stroke="#ddd"/></symbol>
  <symbol id="t-bat" viewBox="0 0 25 17"><path d="M1 1h20v15H1z" fill="none" stroke="#fff" stroke-width="2"/><path d="M3 4h12v9H3zM22 5h3v7h-3z" fill="#fff"/></symbol>
  <symbol id="t-vol" viewBox="0 0 22 20"><path d="M1 7h3l5-6v18l-5-6H1z" fill="none" stroke="#ccc" stroke-width="1.500"/><path d="M14 6l7 7M21 6l-7 7" stroke="#ccc" stroke-width="1.500"/></symbol>
  <symbol id="t-pen" viewBox="0 0 34 34"><path d="M12 23L23 3q4-3 5 2L17 26l-6 6zM20 8l6 4M10 19Q1 20 2 27q3 7 8 4M18 25q2-8 6-6 0 5 8-2l-2-2" fill="none" stroke="#fff" stroke-width="2"/></symbol>
</svg>

<div class="desktop">
  <svg class="edge edge-left" width="24" height="27" aria-hidden="true"><path d="M0 0h24v3H11v24H0z" fill="#0a91da"/><path d="M12 6H6q-3 0-3 3v8q0 3 3 3h6M12 9H8v8h4" fill="none" stroke="#fff" stroke-width="2"/></svg>
  <svg class="edge edge-right" width="11" height="190" aria-hidden="true"><path d="M5 5L0 9l5 5" fill="none" stroke="#ddd" stroke-width="2"/><path d="M6 109l-6 7" stroke="#bbb" stroke-width="2"/><rect x="0" y="164" width="4" height="18" rx="1" fill="#bbb"/></svg>

  <div class="app">
    <header class="titlebar">
      <button class="appbtn" aria-label="Application menu"><span class="appbtn-face"><svg width="24" height="28"><use href="#logo-a"/></svg><i class="tri tri-dark"></i></span></button>
      <div class="qat">
        <button aria-label="New"><svg class="ic"><use href="#new"/></svg></button>
        <button aria-label="Open"><svg class="ic"><use href="#open"/></svg></button>
        <button aria-label="Save"><svg class="ic"><use href="#save"/></svg></button>
        <button aria-label="Save as"><svg class="ic"><use href="#saveas"/></svg></button>
        <button aria-label="Plot"><svg class="ic"><use href="#print"/></svg></button>
        <button aria-label="Undo"><svg class="ic"><use href="#undo"/></svg></button>
        <button class="slim" aria-label="Undo list"><i class="tri"></i></button>
        <button aria-label="Redo"><svg class="ic"><use href="#redo"/></svg></button>
        <button class="slim" aria-label="Redo list"><i class="tri tri-dim"></i></button>
        <button class="slim" aria-label="Customize"><svg width="16" height="14"><use href="#qmenu"/></svg></button>
      </div>
      <h1 class="doc-title">fab academy final project.dwg</h1>
      <div class="info">
        <button class="info-toggle" aria-label="Collapse search"><i class="tri-right"></i></button>
        <input class="info-search" type="text" placeholder="Type a keyword or phrase" aria-label="Help search">
        <button aria-label="Search"><svg class="ic"><use href="#bino"/></svg></button>
        <button class="account"><svg class="ic"><use href="#user"/></svg><span>nourarabi74</span><i class="tri"></i></button>
        <button aria-label="Exchange"><svg class="ic"><use href="#xch"/></svg></button>
        <button class="a360" aria-label="A360"><svg class="ic"><use href="#a360"/></svg><i class="tri"></i></button>
        <button class="more" aria-label="More"><svg width="13" height="9"><use href="#dbl"/></svg></button>
      </div>
      <div class="winbtns">
        <button aria-label="Minimize"><svg width="16" height="16"><path d="M0 8.500h15" stroke="#777"/></svg></button>
        <button aria-label="Maximize"><svg width="16" height="16"><path d="M.5.500h14v14H.5z" fill="none" stroke="#777"/></svg></button>
        <button aria-label="Close"><svg width="16" height="16"><path d="M0 0l16 16M16 0L0 16" stroke="#777"/></svg></button>
      </div>
    </header>

    <nav class="tabs">
      <button class="on">Home</button><button>Solid</button><button>Surface</button><button>Mesh</button><button>Visualize</button><button>Parametric</button><button>Insert</button><button>Annotate</button><button>View</button><button>Manage</button><button>Output</button><button>Add-ins</button><button>A360</button><button>Express Tools</button><button>Featured Apps</button><button>BIM 360</button>
      <button class="tabs-more" aria-label="More tabs"><svg width="16" height="13"><use href="#dbl"/></svg></button>
      <button class="tabs-min" aria-label="Minimize ribbon"><svg width="23" height="13"><rect width="23" height="13" rx="4" fill="#dfe2ea"/><path d="M11.500 3l5 6h-10z" fill="#444"/></svg><i class="tri"></i></button>
    </nav>

    <div class="ribbon">
      <section class="panel">
        <div class="body modeling">
          <button class="big"><svg class="ic52"><use href="#box"/></svg><span>Box</span><i class="tri"></i></button>
          <button class="big"><svg class="ic52"><use href="#extrude"/></svg><span>Extrude</span><i class="tri"></i></button>
          <div class="icons col1"><button aria-label="Polysolid"><svg class="ic"><use href="#poly"/></svg></button><button aria-label="Presspull"><svg class="ic"><use href="#presspull"/></svg></button></div>
        </div>
        <footer><button>Modeling<i class="tri tri-lg"></i></button></footer>
      </section>
      <section class="panel">
        <div class="body mesh">
          <button class="big"><svg class="ic52"><use href="#ball"/></svg><span>Smooth<br>Object</span></button>
          <div class="icons col1"><button aria-label="Smooth more"><svg class="ic"><use href="#mplus"/></svg></button><button aria-label="Smooth less"><svg class="ic"><use href="#mminus"/></svg></button><button aria-label="Crease"><svg class="ic"><use href="#mcrease"/></svg></button></div>
        </div>
        <footer><span>Mesh</span><button class="launch" aria-label="Mesh options"><svg width="10" height="10"><use href="#launch"/></svg></button></footer>
      </section>
      <section class="panel">
        <div class="body icons solid">
          <button aria-label="Union"><svg class="ic"><use href="#union"/></svg></button><button aria-label="Fillet edge"><svg class="ic"><use href="#fillet3"/></svg></button><button aria-label="Edges"><svg class="ic"><use href="#wire"/></svg></button><button aria-label="Edge list"><i class="tri"></i></button>
          <button aria-label="Subtract"><svg class="ic"><use href="#subtract"/></svg></button><button aria-label="Slice"><svg class="ic"><use href="#slice"/></svg></button><button aria-label="Faces"><svg class="ic"><use href="#exface"/></svg></button><button aria-label="Face list"><i class="tri"></i></button>
          <button aria-label="Intersect"><svg class="ic"><use href="#intersect"/></svg></button><button aria-label="Clean"><svg class="ic"><use href="#eraser"/></svg></button><button aria-label="Separate"><svg class="ic"><use href="#separate"/></svg></button><button aria-label="Body list"><i class="tri"></i></button>
        </div>
        <footer><button>Solid Editing<i class="tri tri-lg"></i></button></footer>
      </section>
      <section class="panel">
        <div class="body icons draw">
          <button aria-label="Polyline"><svg class="ic"><use href="#pline"/></svg></button><button aria-label="Helix"><svg class="ic"><use href="#sweep"/></svg></button><button aria-label="Arc"><svg class="ic"><use href="#arc"/></svg></button><button aria-label="Arc list"><i class="tri"></i></button>
          <button aria-label="Spline"><svg class="ic"><use href="#spline"/></svg></button><button aria-label="Line"><svg class="ic"><use href="#line"/></svg></button><button aria-label="Circle"><svg class="ic"><use href="#circle"/></svg></button><button aria-label="Circle list"><i class="tri"></i></button>
          <button aria-label="Polygon"><svg class="ic"><use href="#pentagon"/></svg></button><button aria-label="Rectangle"><svg class="ic"><use href="#rect"/></svg></button><button aria-label="Ellipse"><svg class="ic"><use href="#ellipse"/></svg></button><button aria-label="Ellipse list"><i class="tri"></i></button>
        </div>
        <footer><button>Draw<i class="tri tri-lg"></i></button></footer>
      </section>
      <section class="panel">
        <div class="body icons modify">
          <button aria-label="Convert"><svg class="ic"><use href="#convert"/></svg></button><button aria-label="3D move"><svg class="ic"><use href="#gizmo"/></svg></button><button aria-label="Move"><svg class="ic"><use href="#move"/></svg></button><button aria-label="Copy"><svg class="ic"><use href="#copy"/></svg></button><button aria-label="Trim"><svg class="ic"><use href="#trim"/></svg></button><button aria-label="Trim list"><i class="tri"></i></button>
          <button aria-label="3D align"><svg class="ic"><use href="#align3"/></svg></button><button aria-label="3D rotate"><svg class="ic"><use href="#rot3"/></svg></button><button aria-label="Rotate"><svg class="ic"><use href="#rotate"/></svg></button><button aria-label="Stretch"><svg class="ic"><use href="#stretch"/></svg></button><button aria-label="Fillet"><svg class="ic"><use href="#fillet"/></svg></button><button aria-label="Fillet list"><i class="tri"></i></button>
          <button aria-label="Erase"><svg class="ic"><use href="#brush"/></svg></button><button aria-label="3D scale"><svg class="ic"><use href="#scale3"/></svg></button><button aria-label="Scale"><svg class="ic"><use href="#scale"/></svg></button><button aria-label="Offset"><svg class="ic"><use href="#offset"/></svg></button><button aria-label="Array"><svg class="ic"><use href="#array"/></svg></button><button aria-label="Array list"><i class="tri"></i></button>
        </div>
        <footer><button>Modify<i class="tri tri-lg"></i></button></footer>
      </section>
      <section class="panel">
        <div class="body single"><button class="big"><svg class="ic52"><use href="#section"/></svg><span>Section<br>Plane</span></button></div>
        <footer><button>Section<i class="tri tri-lg"></i></button><button class="launch" aria-label="Section options"><svg width="10" height="10"><use href="#launch"/></svg></button></footer>
      </section>
      <section class="panel">
        <div class="body icons coords">
          <button aria-label="Origin"><svg class="ic"><use href="#c-origin"/></svg></button><button aria-label="Origin list"><i class="tri"></i></button><button aria-label="Named UCS"><svg class="ic"><use href="#c-named"/></svg></button><button aria-label="UCS"><svg class="ic"><use href="#c-view"/></svg></button><button aria-label="UCS icon properties"><svg class="ic"><use href="#c-prop"/></svg></button><button aria-label="World UCS"><svg class="ic"><use href="#c-world"/></svg></button>
          <button aria-label="Rotate X"><svg class="ic"><use href="#c-x"/></svg></button><button aria-label="Rotate list"><i class="tri"></i></button><button aria-label="Previous UCS"><svg class="ic"><use href="#c-prev"/></svg></button><button aria-label="Move origin"><svg class="ic"><use href="#c-face"/></svg></button><button aria-label="Z axis"><svg class="ic"><use href="#c-z"/></svg></button><button aria-label="Three point"><svg class="ic"><use href="#c-3"/></svg></button>
          <button aria-label="Object UCS"><svg class="ic"><use href="#c-obj"/></svg></button><button aria-label="Object list"><i class="tri"></i></button>
          <div class="ucs"><svg class="ic"><use href="#c-world"/></svg><select aria-label="Named UCS"><option>World</option></select><i class="tri tri-lg"></i></div>
        </div>
        <footer><span>Coordinates</span><button class="launch" aria-label="Coordinate options"><svg width="10" height="10"><use href="#launch"/></svg></button></footer>
      </section>
      <button class="fold"><svg class="ic54"><use href="#vstyle"/></svg><span>View</span><i class="tri tri-lg"></i></button>
      <button class="fold"><svg class="ic54"><use href="#selbox"/></svg><span>Selection</span><i class="tri tri-lg"></i></button>
      <button class="fold"><svg class="ic54"><use href="#layers"/></svg><span>Layers</span><i class="tri tri-lg"></i></button>
      <button class="fold"><svg class="ic"><use href="#groups"/></svg><span>Groups</span><i class="tri tri-lg"></i></button>
      <section class="panel">
        <div class="body single"><button class="big"><svg class="ic52"><use href="#base" x="3" y="12" width="46" height="34"/></svg><span>Base</span><i class="tri"></i></button></div>
        <footer><button>View<i class="tri tri-lg"></i></button><button class="launch" aria-label="View options"><svg width="10" height="10"><use href="#launch"/></svg></button></footer>
      </section>
      <section class="panel touch">
        <div class="body single"><button class="big"><svg class="ic52"><use href="#touch" x="5" y="6" width="42" height="42"/></svg><span>Select<br>Mode</span></button></div>
        <footer><span>Touch</span></footer>
      </section>
      <div class="ribbon-end"></div>
    </div>

    <nav class="files">
      <button class="file file-start"><svg width="222" height="38" aria-hidden="true"><path d="M0 37Q12 34 15 20 19 1 28 1H208Q217 1 221 20 218 37 208 37z" fill="url(#tabOff)"/></svg><span>Start</span></button>
      <button class="file file-on"><svg width="310" height="38" aria-hidden="true"><path d="M0 38Q2 30 4 20 7 1 19 1H276Q287 1 292 20 297 38 310 38z" fill="url(#tabOn)"/></svg><span>fab academy final project*</span><svg class="x" width="12" height="12"><path d="M1 1l10 10M11 1L1 11" stroke="#555" stroke-width="3"/></svg></button>
      <button class="file-add" aria-label="New drawing"><svg width="14" height="14"><use href="#plus"/></svg></button>
    </nav>

    <main class="canvas">
      <svg class="drawing" viewBox="11 303 1898 651">
        <g fill="none" stroke="#000" shape-rendering="crispEdges">
          <path d="M783.500 360.500h290v11h-290zM783.500 499.500h290v10h-290zM783.500 682.500h290v11h-290zM783.500 892.500h290v11h-290z"/>
          <path d="M921.500 371v128M935.500 371v128M921.500 509v173M935.500 509v173M921.500 693v199M935.500 693v199"/>
          <path d="M675.500 360v259M675.500 635v257M675 360.500h11M675 892.500h11"/>
          <path d="M744.500 371v57M744.500 444v55M744 371.500h11M744 499.500h11"/>
          <path d="M745.500 509v80M745.500 605v77M745 509.500h11M745 682.500h11"/>
          <path d="M745.500 693v92M745.500 801v91M745 693.500h11M745 892.500h11"/>
          <path d="M1341.500 658v41M1341.500 713v41M1294 705.500h41M1349 705.500h41M1335.500 699.500h13v13h-13z"/>
        </g>
        <g fill="none" stroke="#000"><circle cx="797" cy="910" r="6.500"/><circle cx="928.500" cy="910" r="6.500"/><circle cx="1063" cy="910" r="6.500"/></g>
        <path d="M674 359h3v3h-3zM674 891h3v3h-3zM743 370h3v3h-3zM743 498h3v3h-3zM744 508h3v3h-3zM744 681h3v3h-3zM744 692h3v3h-3zM744 891h3v3h-3z"/>
        <g class="dims"><text x="675" y="635">200.0</text><text x="744" y="443">48.0</text><text x="745" y="604">65.0</text><text x="745" y="801">75.0</text></g>
        <path d="M58 903v-48l3-3 3 3v48z" fill="#4fa24a" stroke="#3a7838"/>
        <path d="M63 900h44l5 3-5 3H63z" fill="#c04a48" stroke="#7a2f2e"/>
        <circle cx="61" cy="903" r="3" fill="#3b78c8"/>
        <g class="axis"><text x="64" y="852" fill="#1fae2b">Y</text><text x="111" y="900" fill="#e02a32">X</text><text x="65" y="900" fill="#1c5fe0">Z</text></g>
      </svg>
      <button class="vp-label">[−][Top][Conceptual]</button>
      <div class="vp-btns">
        <button aria-label="Minimize view"><svg width="12" height="12"><path d="M.5 6.500h11v4H.5z" fill="#eee" stroke="#555"/></svg></button>
        <button aria-label="Restore view"><svg width="12" height="12"><path d="M2.500.500h9v9h-9zM.5 2.500h8v9h-8zM3.500 5.500h3v3h-3z" fill="none" stroke="#555"/></svg></button>
        <button aria-label="Close view"><svg width="12" height="12"><path d="M1 1l10 10M11 1L1 11" stroke="#555" stroke-width="3.500"/><path d="M1 1l10 10M11 1L1 11" stroke="#fff"/></svg></button>
      </div>
      <div class="cube">
        <svg width="128" height="128" viewBox="0 0 128 128"><circle cx="64" cy="64" r="50" fill="none" stroke="#fcfcfc" stroke-width="12"/><rect x="40" y="40" width="48" height="48" rx="2" fill="#ededee" stroke="#999"/><rect x="50" y="50" width="28" height="28" fill="#dfe1e6"/><text class="face" x="64" y="69">TOP</text><g class="winds"><text x="64" y="20">N</text><text x="64" y="122">S</text><text x="13" y="71">W</text><text x="115" y="71">E</text></g></svg>
        <button class="wcs">WCS<svg width="10" height="6"><path d="M1 1h8L5 5z" fill="none" stroke="#ccc"/></svg></button>
      </div>
      <div class="navbar">
        <svg width="26" height="206" viewBox="0 0 26 206" fill="none" stroke="#d2d2d2" aria-hidden="true"><circle cx="22" cy="4" r="3"/><circle cx="12" cy="29" r="10"/><circle cx="12" cy="28" r="6"/><path d="M17 23v9q5 1 5-6M0 55h26M12 48v1M5 74q-5-6-2-7l5 5-3-11q2-3 3 1l2 7V59q2-3 3 0l1 10 3-9q3-1 2 2l-2 9 4-4q3 0 0 4-5 12-10 12-5 0-9-9zM0 87l22 22M0 106l15-17M3 88H0v3M13 88h3v3"/><circle cx="17" cy="102" r="5"/><path d="M12 118v1M12 128v22M9 131l3-3 3 3M9 147l3 3 3-3M7 132v14M17 132v14M12 156v1M0 163h26M0 168h24v5H0zM0 178h16v13H0zM5 181l6 4-6 4z"/><ellipse cx="12" cy="139" rx="11" ry="4"/><circle cx="22" cy="202" r="3"/></svg>
      </div>
    </main>

    <footer class="status">
      <div class="layouts">
        <button class="lay on"><svg width="116" height="31" viewBox="0 0 116 31" aria-hidden="true"><path d="M0 0H104Q100 2 97 14 93 31 86 31H26Q18 31 15 18 12 2 0 0z" fill="url(#lay)"/></svg><span>Model</span></button>
        <button class="lay"><svg width="116" height="31" aria-hidden="true"><path d="M1 0H106Q101 3 98 16 95 31 86 31H18Q9 31 6 16 4 3 1 0z" fill="#5e5e5e"/></svg><span>Layout1</span></button>
        <button class="lay"><svg width="116" height="31" aria-hidden="true"><path d="M1 0H114Q105 3 102 16 98 31 89 31H19Q10 31 7 16 4 3 1 0z" fill="#5e5e5e"/></svg><span>Layout2</span></button>
        <button class="lay-add" aria-label="New layout"><svg width="14" height="14"><use href="#plus"/></svg></button>
      </div>
      <div class="tools">
        <div class="tg g-model"><button>MODEL</button></div>
        <div class="tg g-grid"><button aria-label="Grid"><svg class="ic"><use href="#s-grid"/></svg></button><button aria-label="Snap"><svg class="ic"><use href="#s-dots"/></svg></button><button aria-label="Snap list"><i class="tri tri-lg"></i></button></div>
        <div class="tg g-ortho"><button aria-label="Ortho"><svg class="ic"><use href="#s-ortho"/></svg></button><button aria-label="Polar"><svg class="ic"><use href="#s-polar"/></svg></button><button aria-label="Polar list"><i class="tri tri-lg"></i></button><button aria-label="Isodraft"><svg width="32" height="34"><use href="#s-iso"/></svg></button><button aria-label="Isodraft list"><i class="tri tri-lg"></i></button><button class="div" aria-label="Tracking"><svg class="ic"><use href="#s-track"/></svg></button><button aria-label="Object snap"><svg class="ic"><use href="#s-snap"/></svg></button><button aria-label="Snap modes"><i class="tri tri-lg"></i></button></div>
        <div class="tg g-ann"><button class="blue" aria-label="Annotation visibility"><svg class="ic"><use href="#s-ann"/><circle cx="21" cy="8" r="5" fill="#555" stroke="#1e8bff" stroke-width="2"/></svg></button><button class="gray" aria-label="Auto scale"><svg class="ic"><use href="#s-ann"/><path d="M25 1l-7 7h5l-4 6 9-8h-5l4-5z" fill="#bbb" stroke="#555"/></svg></button><button class="gray" aria-label="Annotation scale"><svg class="ic"><use href="#s-ann"/></svg></button><button class="scale">1:1<i class="tri tri-lg"></i></button></div>
        <div class="tg g-gear"><button aria-label="Workspace"><svg width="24" height="24"><use href="#s-gear"/></svg></button><button aria-label="Workspace list"><i class="tri tri-lg"></i></button><button class="div" aria-label="Monitor"><svg width="24" height="24"><use href="#s-plus"/></svg></button></div>
        <div class="tg g-one"><button aria-label="Isolate"><svg class="ic"><use href="#s-shapes"/></svg></button></div>
        <div class="tg g-one"><button aria-label="Performance"><svg width="32" height="32"><use href="#s-perf"/></svg></button></div>
        <div class="tg g-py"><button aria-label="Drawing status"><svg class="ic"><use href="#s-pc"/></svg></button></div>
        <div class="tg g-end"><button aria-label="Clean screen"><svg width="28" height="22"><use href="#s-full"/></svg></button><button aria-label="Customize"><svg width="26" height="24"><use href="#s-menu"/></svg></button></div>
      </div>
    </footer>
  </div>
  <div class="under"></div>

  <div class="taskbar">
    <button class="start" aria-label="Start"><svg width="24" height="24"><use href="#t-win"/></svg></button>
    <label class="search"><svg width="44" height="44"><use href="#t-cortana"/></svg><input type="text" placeholder="Type here to search" aria-label="Search"><svg width="20" height="28"><use href="#t-mic"/></svg></label>
    <div class="apps">
      <button class="view" aria-label="Task view"><svg width="30" height="28"><use href="#t-view"/></svg></button>
      <button class="run" aria-label="Chrome"><svg width="38" height="38"><use href="#t-chrome"/></svg></button>
      <button class="run" aria-label="Sticky notes"><svg width="31" height="31"><use href="#t-note"/></svg></button>
      <button class="run" aria-label="WhatsApp"><svg width="42" height="42"><use href="#t-whats"/></svg></button>
      <button class="run active" aria-label="AutoCAD"><svg width="42" height="42"><use href="#t-acad"/></svg></button>
      <button class="run" aria-label="Brackets"><svg width="38" height="38"><use href="#t-brk"/></svg></button>
      <button class="run" aria-label="File Explorer"><svg width="38" height="32"><use href="#t-exp"/></svg></button>
    </div>
    <div class="tray">
      <button aria-label="People"><svg width="26" height="28"><use href="#t-people"/></svg></button>
      <button aria-label="Hidden icons"><svg width="20" height="12"><use href="#t-up"/></svg></button>
      <button aria-label="Dropbox"><svg width="24" height="22"><use href="#t-drop"/></svg></button>
      <button aria-label="Network"><svg width="28" height="28"><use href="#t-wifi"/></svg></button>
      <button aria-label="Battery"><svg width="25" height="17"><use href="#t-bat"/></svg></button>
      <button aria-label="Volume"><svg width="22" height="20"><use href="#t-vol"/></svg></button>
      <button aria-label="Pen"><svg width="34" height="34"><use href="#t-pen"/></svg></button>
      <button>ENG</button>
      <button class="clock"><span>8:42 AM</span><span>2/25/2019</span></button>
      <button class="notes" aria-label="Notifications"><svg width="28" height="28"><path d="M0 0h27v20H12v6l-6-6H0z" fill="#fff"/><path d="M6 6h15M6 11h15M6 16h15" stroke="#111" stroke-width="1.500"/></svg><span class="badge">26</span></button>
      <button class="peek" aria-label="Show desktop"></button>
    </div>
  </div>
</div>
</body>
</html>
```
FILE: styles.css
```css
* { box-sizing: border-box; }
body { margin: 0; font-family: "Open Sans", "Noto Sans", sans-serif; font-size: 17px; color: #f0f0f0; }
button { display: flex; align-items: center; justify-content: center; margin: 0; padding: 0; border: 0; background: none; font: inherit; color: inherit; white-space: nowrap; }
svg { display: block; flex: none; }
.sprite { position: absolute; width: 0; height: 0; }
.ic { width: 28px; height: 28px; }
.ic52 { width: 52px; height: 52px; }
.ic54 { width: 54px; height: 54px; }

.tri { flex: none; width: 0; height: 0; border: 4px solid transparent; border-top: 5px solid #fff; border-bottom: 0; }
.tri-lg { border-width: 7px 6px 0; }
.tri-dim { border-top-color: #bbb; }
.tri-dark { border-top-color: #333; }
.tri-right { width: 0; height: 0; border: 6px solid transparent; border-left: 7px solid #fff; border-right: 0; }

.desktop {
  position: relative; display: flex; flex-direction: column; min-height: 100vh; padding-top: 3px;
  background:
    linear-gradient(#3a3f42 289px, #2b2c2d 289px 329px, #3b4245 329px 478px, #48484c 478px 980px, #2b2727 980px) 0 0 / 11px 100% no-repeat,
    linear-gradient(#3f4548 73px, #555 73px) 100% 0 / 11px 100% no-repeat,
    #444;
}
.edge { position: absolute; top: 0; }
.edge-left { left: 0; }
.edge-right { right: 0; }
.app { flex: 1; display: flex; flex-direction: column; margin: 0 11px; background: #fff; }

/* title bar */
.titlebar { position: relative; display: flex; height: 48px; padding-top: 8px; }
.appbtn { position: absolute; left: 0; top: 8px; z-index: 2; width: 69px; height: 69px; background: #999; }
.appbtn-face { display: flex; align-items: center; justify-content: center; gap: 2px; width: 41px; height: 41px; border: 1px solid #000; background: linear-gradient(#b5b5b5, #8c8c8c); }
.qat { display: flex; align-items: center; width: 365px; margin-left: 69px; padding-left: 8px; border-top: 2px solid #777; border-right: 1px solid #555; background: linear-gradient(#a2a2a2, #4b4b4b); }
.qat button { width: 41px; }
.qat .slim { width: 20px; }
.qat .slim:last-child { width: 28px; }
.doc-title { flex: 1; margin: 0; padding: 4px 0 0 24px; color: #111; font-size: 19px; font-weight: 400; line-height: 28px; text-align: center; }
.info { display: flex; align-items: center; width: 715px; border-top: 2px solid #666; background: linear-gradient(#a2a2a2, #4b4b4b); font-size: 18px; }
.info > button { width: 41px; }
.info > .info-toggle { width: 24px; }
.info-search { width: 305px; height: 36px; padding: 0 5px; border: 2px solid #333; border-radius: 0; background: #737373; color: #eee; font: italic 18px "Open Sans", sans-serif; }
.info-search::placeholder { color: #c4c4c4; opacity: 1; }
.info > .account { width: 207px; justify-content: flex-start; gap: 9px; padding-left: 6px; }
.account .tri { margin-left: auto; margin-right: 13px; }
.info > .a360 { width: 58px; gap: 10px; }
.info > .more { flex: 1; color: #111; }
.winbtns { display: flex; align-items: center; width: 318px; height: 40px; padding: 0 0 7px 90px; }
.winbtns button { width: 76px; height: 32px; }

/* ribbon tabs */
.tabs { display: grid; grid-template-columns: 84px 78px 98px 79px 109px 125px 80px 112px 74px 103px 94px 99px 76px 145px 156px 101px 24px 1fr; height: 37px; padding: 4px 0 0 80px; border: solid #2c2c2c; border-width: 1px 1px 2px 0; background: #555; color: #d8d8d8; }
.tabs button { height: 30px; padding-bottom: 4px; }
.tabs .on { padding-right: 6px; border: 1px solid #333; border-bottom: 0; background: linear-gradient(#777, #606060); color: #fff; }
.tabs .tabs-more { padding-bottom: 2px; color: #fff; }
.tabs .tabs-min { justify-content: flex-start; gap: 9px; padding: 0 0 2px 12px; }

/* ribbon */
.ribbon {
  display: grid; height: 168px; padding-left: 4px; border-bottom: 2px solid #989898; background: #404040; font-size: 18px;
  grid-template-columns: minmax(0, 222fr) minmax(0, 127fr) minmax(0, 161fr) minmax(0, 161fr) minmax(0, 248fr) minmax(0, 125fr) minmax(0, 248fr) repeat(5, minmax(0, 104fr)) minmax(0, 72fr) minmax(0, 10fr);
}
.panel { display: flex; flex-direction: column; border-right: 2px solid #3c3c3c; background: #5c5c5c; box-shadow: inset 1px 0 #666; }
.panel .body { height: 135px; }
.panel footer { display: flex; align-items: center; justify-content: center; height: 29px; margin-left: 1px; background: linear-gradient(#4c4c4c, #545454); }
.panel footer > :first-child { flex: 1; text-align: center; }
.panel footer button { gap: 12px; color: #f4f4f4; }
.panel footer .launch { flex: 0 0 22px; }
.big { flex-direction: column; justify-content: flex-start; padding-top: 12px; line-height: 25px; text-align: center; }
.big span { margin-top: 10px; }
.big .tri { margin-top: 4px; }
.body.modeling { display: grid; grid-template-columns: 76px 94px 50px; }
.body.mesh { display: grid; grid-template-columns: 82px 34px; }
.body.single { display: flex; justify-content: center; }
.icons { display: grid; grid-template-rows: 41px 40px 40px; align-content: start; justify-items: center; padding-top: 7px; }
.icons button { height: 100%; }
.solid { grid-template-columns: 48px 48px 38px 22px; }
.draw { grid-template-columns: 41px 41px 52px 10px; padding-left: 6px; }
.modify { grid-template-columns: 47px 48px 36px 56px 30px 30px; }
.coords { grid-template-columns: 40px 14px 66px 30px 52px 30px; padding-left: 5px; }
.ucs { position: relative; grid-column: 3 / -1; justify-self: start; align-self: end; width: 170px; height: 37px; margin-left: 13px; }
.ucs .ic { position: absolute; left: 5px; top: 4px; }
.ucs .tri { position: absolute; right: 3px; top: 17px; }
.ucs select { width: 100%; height: 100%; padding: 0 20px 0 36px; border: 2px solid #2e2e2e; border-radius: 0; background: linear-gradient(#6c6c6c, #565656); color: #fff; font: inherit; appearance: none; }
.fold { flex-direction: column; justify-content: flex-start; margin: 0 2px; padding: 8px 0 8px; border: 1px solid #333; background: linear-gradient(#6f6f6f, #4f4f4f); line-height: 25px; }
.fold span { margin-top: 6px; }
.fold .tri { margin-top: auto; }
.touch footer { box-shadow: inset 0 -3px #2f5f8a; background: linear-gradient(#555, #2e2e2e); }
.ribbon-end { background: linear-gradient(#4e4e4e, #333); }

/* drawing tabs */
.files { display: flex; height: 47px; padding: 4px 0 0 24px; border-bottom: 5px solid #555; background: #383838; font-size: 18px; }
.file { position: relative; height: 38px; justify-content: flex-start; }
.file svg:first-child { position: absolute; left: 0; top: 0; }
.file span { position: relative; padding-top: 2px; }
.file-start { width: 221px; padding-left: 30px; color: #b0b0b0; }
.file-on { width: 297px; padding-left: 18px; }
.file-on .x { position: relative; margin-left: 16px; }
.file-add { width: 40px; height: 26px; margin-top: 7px; margin-left: 4px; border-radius: 2px 18px 4px 14px; background: #505050; }

/* drawing area */
.canvas { position: relative; flex: 1; display: flex; min-height: 400px; background: #fff; color: #222; }
.drawing { width: 100%; height: auto; flex: 1; }
.dims { font: 22px "Liberation Sans", Arial, sans-serif; text-anchor: middle; fill: #777; stroke: #111; stroke-width: 1px; }
.axis { font: 300 18px "Open Sans", sans-serif; text-anchor: middle; }
.vp-label { position: absolute; left: 3px; top: 6px; font-size: 12px; line-height: 16px; color: #111; }
.vp-btns { position: absolute; right: 11px; top: 9px; display: flex; gap: 8px; }
.cube { position: absolute; right: 12px; top: 35px; display: flex; flex-direction: column; align-items: center; gap: 16px; }
.cube .face { font: bold 12px "Open Sans", sans-serif; text-anchor: middle; fill: #8e9296; }
.winds { font: bold 18px "Liberation Sans", Arial, sans-serif; text-anchor: middle; fill: #f4f4f4; stroke: #b4b4b4; stroke-width: 1px; }
.wcs { gap: 5px; width: 48px; height: 16px; border-radius: 5px; background: #ececf4; color: #8c8c90; font-size: 12px; }
.navbar { position: absolute; right: 3px; top: 220px; width: 34px; height: 214px; padding: 3px; border: 1px solid #c4c4c4; border-radius: 5px; background: #f5f5f5; }

/* layout tabs and status bar */
.status { display: flex; justify-content: space-between; height: 49px; border-top: 1px solid #555; background: #383838; }
.layouts { display: flex; padding-left: 15px; }
.lay { position: relative; width: 103px; height: 30px; color: #b4b4b4; }
.lay svg { position: absolute; left: 0; top: 0; }
.lay span { position: relative; }
.lay.on { z-index: 1; color: #fff; font-weight: 700; }
.lay-add { width: 39px; height: 28px; margin-left: 8px; border-radius: 18px 2px 18px 2px; background: #535353; }
.tools { display: flex; gap: 2px; padding-top: 1px; background: #4a4a4a; }
.tg { display: grid; height: 46px; border: 2px solid #7c7c7c; background: #505050; }
.tg .div { border-left: 1px solid #808080; }
.g-model { width: 84px; font-size: 18px; color: #fff; }
.g-grid { width: 111px; grid-template-columns: 40px 40px 1fr; }
.g-ortho { width: 286px; grid-template-columns: 41px 42px 25px 41px 25px 44px 40px 1fr; }
.g-ann { width: 182px; grid-template-columns: 40px 41px 41px 1fr; }
.g-gear { width: 112px; grid-template-columns: 39px 27px 1fr; }
.g-one { width: 45px; }
.g-py { width: 38px; }
.g-end { width: 85px; grid-template-columns: 1fr 1fr; }
.blue { color: #1e8bff; }
.gray { color: #bbb; }
.scale { gap: 6px; color: #fff; }

.under { height: 9px; background: linear-gradient(90deg, #222 381px, transparent 381px calc(100% - 64px), #555 calc(100% - 64px)), linear-gradient(#bbb, #f4f4f4); }

/* taskbar */
.taskbar { display: flex; height: 68px; background: #0a0a0a; color: #fff; }
.start { width: 82px; }
.search { display: flex; align-items: center; width: 584px; padding: 0 26px 0 16px; background: #f2f2f2; }
.search input { flex: 1; min-width: 0; padding: 0 15px; border: 0; background: none; color: #333; font: 23px "Open Sans", sans-serif; }
.search input::placeholder { color: #333; opacity: 1; }
.apps { display: flex; gap: 3px; }
.apps button { width: 76px; height: 68px; }
.apps .view { width: 83px; }
.apps .run { position: relative; }
.apps .run::after { content: ""; position: absolute; left: 7px; right: 6px; bottom: 0; height: 3px; background: #f48a94; }
.apps .active { background: #3a3a3a; }
.apps .active::after { left: 0; right: 0; }
.tray { display: grid; grid-template-columns: 68px 70px 38px 70px 40px 62px 64px 66px 108px 86px 9px; margin-left: auto; font-size: 19px; }
.clock { flex-direction: column; line-height: 32px; }
.notes { position: relative; padding-right: 10px; }
.badge { position: absolute; left: 32px; top: 31px; display: flex; align-items: center; justify-content: center; width: 34px; height: 30px; border: 1px solid #888; border-radius: 16px; background: #333; font-size: 18px; font-weight: 600; }
.peek { border-left: 1px solid #777; }
```
